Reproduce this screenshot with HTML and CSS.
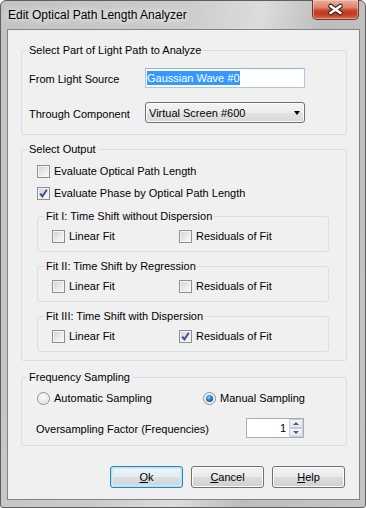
FILE: index.html
```html
<!DOCTYPE html>
<html>
<head>
<meta charset="utf-8">
<title>Edit Optical Path Length Analyzer</title>
<link rel="stylesheet" href="styles.css">
</head>
<body>
<div class="window">
  <div class="titlebar">
    <span class="title">Edit Optical Path Length Analyzer</span>
    <div class="close">
      <svg width="45" height="19" viewBox="0 0 45 19">
        <path d="M17.5 6 L27.5 13 M27.5 6 L17.5 13" stroke="#3b1f1a" stroke-width="4.6" stroke-linecap="round" fill="none"/>
        <path d="M17.5 6 L27.5 13 M27.5 6 L17.5 13" stroke="#ffffff" stroke-width="2.6" stroke-linecap="round" fill="none"/>
      </svg>
    </div>
  </div>
  <div class="client">
    <fieldset class="group g1">
      <legend>Select Part of Light Path to Analyze</legend>
      <div class="g1-body">
        <div class="field-row">
          <span class="field-label">From Light Source</span>
          <div class="textbox"><span class="sel">Gaussian Wave #0</span></div>
        </div>
        <div class="field-row">
          <span class="field-label">Through Component</span>
          <div class="combo"><span>Virtual Screen #600</span><span class="arrow"></span></div>
        </div>
      </div>
    </fieldset>

    <fieldset class="group g2">
      <legend>Select Output</legend>
      <div class="g2-body">
        <div class="check-row"><span class="cb"></span><span>Evaluate Optical Path Length</span></div>
        <div class="check-row"><span class="cb checked"><svg width="11" height="11" viewBox="0 0 11 11"><path d="M2.2 5.6 L4.4 8.4 L8.8 1.8" stroke="#3c4c94" stroke-width="1.9" fill="none"/></svg></span><span>Evaluate Phase by Optical Path Length</span></div>

        <fieldset class="group fit fit1">
          <legend>Fit I: Time Shift without Dispersion</legend>
          <div class="fit-body">
            <div class="check-row"><span class="cb"></span><span>Linear Fit</span></div>
            <div class="check-row"><span class="cb"></span><span>Residuals of Fit</span></div>
          </div>
        </fieldset>

        <fieldset class="group fit">
          <legend>Fit II: Time Shift by Regression</legend>
          <div class="fit-body">
            <div class="check-row"><span class="cb"></span><span>Linear Fit</span></div>
            <div class="check-row"><span class="cb"></span><span>Residuals of Fit</span></div>
          </div>
        </fieldset>

        <fieldset class="group fit">
          <legend>Fit III: Time Shift with Dispersion</legend>
          <div class="fit-body">
            <div class="check-row"><span class="cb"></span><span>Linear Fit</span></div>
            <div class="check-row"><span class="cb checked"><svg width="11" height="11" viewBox="0 0 11 11"><path d="M2.2 5.6 L4.4 8.4 L8.8 1.8" stroke="#3c4c94" stroke-width="1.9" fill="none"/></svg></span><span>Residuals of Fit</span></div>
          </div>
        </fieldset>
      </div>
    </fieldset>

    <fieldset class="group g3">
      <legend>Frequency Sampling</legend>
      <div class="g3-body">
        <div class="radio-row">
          <div class="check-row"><span class="rb"></span><span>Automatic Sampling</span></div>
          <div class="check-row"><span class="rb on"><span class="dot"></span></span><span>Manual Sampling</span></div>
        </div>
        <div class="spin-row">
          <span class="spin-label">Oversampling Factor (Frequencies)</span>
          <div class="spinner">
            <span class="spin-value">1</span>
            <div class="spin-buttons">
              <span class="spin-btn"><span class="up"></span></span>
              <span class="spin-btn"><span class="down"></span></span>
            </div>
          </div>
        </div>
      </div>
    </fieldset>

    <div class="buttons">
      <div class="btn default"><span><u>O</u>k</span></div>
      <div class="btn"><span><u>C</u>ancel</span></div>
      <div class="btn"><span><u>H</u>elp</span></div>
    </div>
  </div>
</div>
</body>
</html>
```
FILE: styles.css
```css
* { box-sizing: border-box; }
html, body { margin: 0; padding: 0; }
body {
  width: 366px;
  height: 508px;
  overflow: hidden;
  background: #ffffff;
  font-family: "Liberation Sans", Arial, sans-serif;
  font-size: 11px;
  color: #000;
}

.window {
  width: 366px;
  height: 508px;
  border: 1px solid #5e5e5e;
  border-radius: 6px 6px 3px 3px;
  background: linear-gradient(100deg, #c3c3c3 0%, #cbcbcb 40%, #dcdcdc 58%, #bdbdbd 72%, #c6c6c6 100%);
  padding: 0 5px 7px 6px;
  display: flex;
  flex-direction: column;
}

.titlebar {
  height: 28px;
  flex: none;
  display: flex;
  align-items: center;
  justify-content: space-between;
  padding-left: 1px;
}
.title {
  font-size: 12px;
  color: #000;
  text-shadow: 0 0 6px rgba(255,255,255,0.95), 0 0 10px rgba(255,255,255,0.8);
}
.close {
  align-self: flex-start;
  margin-top: -1px;
  margin-right: 1px;
  width: 47px;
  height: 20px;
  border: 1px solid #6b3a30;
  border-top: none;
  border-radius: 0 0 5px 5px;
  background: linear-gradient(#eab0a2 0%, #dd826b 40%, #c8452b 55%, #c23a22 75%, #d9694c 100%);
  box-shadow: inset 0 0 0 1px rgba(255,220,210,0.45);
  display: flex;
  align-items: center;
  justify-content: center;
}
.close svg { display: block; }

.client {
  flex: 1;
  border: 1px solid #838383;
  background: #f0f0f0;
  padding: 13px 12px 0 13px;
  display: flex;
  flex-direction: column;
}

/* group boxes */
.group {
  margin: 0;
  padding: 0;
  min-width: 0;
  border: 1px solid #d5dfe5;
  border-radius: 3px;
}
.group > legend {
  margin-left: 5px;
  padding: 0 2px;
  line-height: 15px;
}
.g2 { margin-top: 7px; }
.g3 { margin-top: 9px; }

.g1-body {
  padding: 10px 0 11px 7px;
  display: flex;
  flex-direction: column;
  gap: 14px;
}
.field-row {
  display: flex;
  align-items: center;
}
.field-label {
  width: 116px;
  padding-top: 2px;
}
.textbox {
  width: 160px;
  height: 20px;
  border: 1px solid #a9c6e4;
  border-top-color: #90b4da;
  background: #fff;
  padding-left: 1px;
  display: flex;
  align-items: center;
}
.sel {
  background: #3399ff;
  color: #fff;
  line-height: 14px;
}
.combo {
  width: 160px;
  height: 21px;
  border: 1px solid #707070;
  border-radius: 3px;
  background: linear-gradient(#f4f4f4 0%, #ececec 50%, #e2e2e2 51%, #d9d9d9 100%);
  box-shadow: inset 0 0 0 1px #fafafa;
  padding: 0 4px 0 3px;
  display: flex;
  align-items: center;
  justify-content: space-between;
}
.arrow {
  width: 0;
  height: 0;
  border-left: 3.5px solid transparent;
  border-right: 3.5px solid transparent;
  border-top: 4px solid #000;
}

.g2-body {
  padding: 6px 15px 8px 15px;
  display: flex;
  flex-direction: column;
}
.g2-body > .check-row + .check-row { margin-top: 6px; }
.fit1 { margin-top: 8px; }
.fit { margin-right: 2px; }
.fit + .fit { margin-top: 7px; }
.fit > legend { margin-left: 6px; }
.fit-body {
  padding: 4px 0 7px 14px;
  display: grid;
  grid-template-columns: 127px auto;
}

.check-row {
  height: 16px;
  display: flex;
  align-items: center;
  gap: 4px;
}
.cb {
  width: 13px;
  height: 13px;
  flex: none;
  border: 1px solid #8e8f8f;
  background: linear-gradient(135deg, #cdd0d4 0%, #e9eaeb 55%, #fbfbfb 100%);
  box-shadow: inset 0 0 0 1px #f4f4f4;
  display: flex;
  align-items: center;
  justify-content: center;
}
.cb svg { display: block; }
.rb {
  width: 13px;
  height: 13px;
  flex: none;
  border-radius: 50%;
  border: 1px solid #8e8f8f;
  background: radial-gradient(circle at 45% 40%, #fbfbfb 0%, #e6e7e8 55%, #c9cbcd 100%);
  box-shadow: inset 0 0 0 1px #f6f6f6;
  display: flex;
  align-items: center;
  justify-content: center;
}
.rb .dot {
  width: 7px;
  height: 7px;
  border-radius: 50%;
  background: radial-gradient(circle at 40% 35%, #9ad6f6 0%, #2b84bd 40%, #0e3d62 100%);
}

.g3-body {
  padding: 5px 0 7px 15px;
  display: flex;
  flex-direction: column;
  gap: 12px;
}
.radio-row {
  display: grid;
  grid-template-columns: 166px auto;
}
.spin-row {
  display: flex;
  align-items: center;
  margin-left: -1px;
}
.spin-label {
  width: 210px;
  padding-top: 2px;
}
.spinner {
  width: 58px;
  height: 20px;
  border: 1px solid #abadb3;
  background: #fff;
  display: flex;
}
.spin-value {
  flex: 1;
  text-align: right;
  padding-right: 3px;
  line-height: 18px;
}
.spin-buttons {
  width: 14px;
  display: flex;
  flex-direction: column;
}
.spin-btn {
  height: 9px;
  border: 1px solid #c3cbd6;
  border-radius: 1px;
  background: linear-gradient(#f6f8fb, #e1e7ef);
  display: flex;
  align-items: center;
  justify-content: center;
}
.spin-btn .up {
  width: 0; height: 0;
  border-left: 3px solid transparent;
  border-right: 3px solid transparent;
  border-bottom: 3px solid #4d6088;
}
.spin-btn .down {
  width: 0; height: 0;
  border-left: 3px solid transparent;
  border-right: 3px solid transparent;
  border-top: 3px solid #4d6088;
}

.buttons {
  margin-top: 20px;
  padding-right: 2px;
  display: flex;
  justify-content: flex-end;
  gap: 8px;
}
.btn {
  width: 73px;
  height: 22px;
  border: 1px solid #707070;
  border-radius: 3px;
  background: linear-gradient(#f2f2f2 0%, #ebebeb 50%, #dddddd 51%, #cfcfcf 100%);
  box-shadow: inset 0 0 0 1px #fcfcfc;
  display: flex;
  align-items: center;
  justify-content: center;
}
.btn.default {
  border-color: #3c7fb1;
  box-shadow: inset 0 0 0 1px #48d5fc40, inset 0 0 0 2px #c9ecfb;
  background: linear-gradient(#f0f4f6 0%, #e6ecef 50%, #d9e0e4 51%, #cdd5da 100%);
}
.btn u { text-decoration-thickness: 1px; text-underline-offset: 1px; }
```
